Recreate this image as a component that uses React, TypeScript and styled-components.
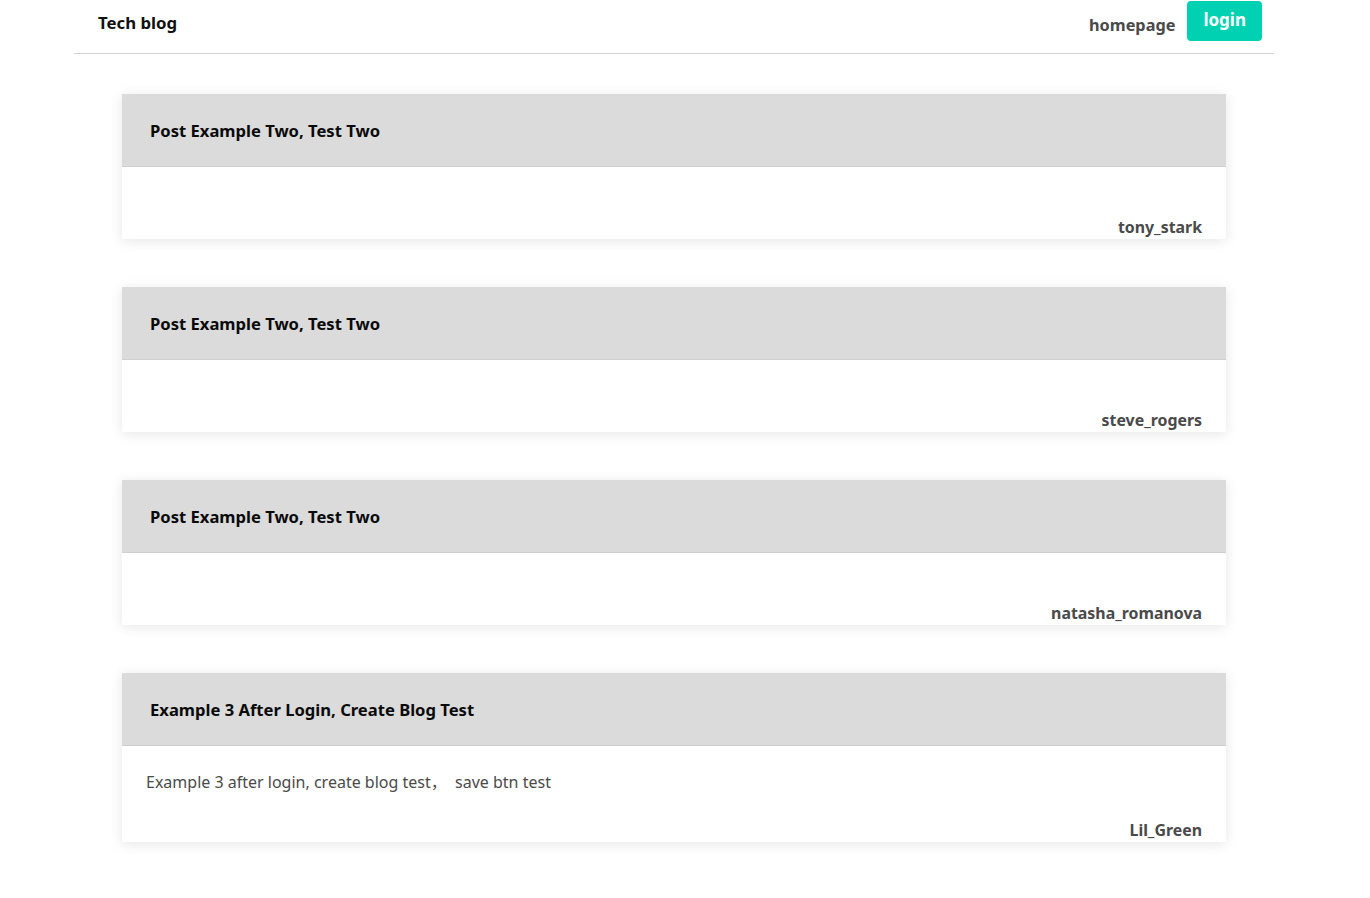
import React from 'react';
import styled, { createGlobalStyle } from 'styled-components';

const GlobalStyle = createGlobalStyle`
  html, body {
    margin: 0;
    padding: 0;
    background: #fff;
    font-family: "Noto Sans", "Open Sans", "Noto Sans CJK SC", sans-serif;
    color: #4a4a4a;
  }
`;

const Page = styled.div`
  width: 1200px;
  margin-left: 74px;
`;

const NavBar = styled.nav`
  height: 53px;
  border-bottom: 1px solid #d3d3d3;
  display: flex;
  justify-content: space-between;
  align-items: flex-start;
  padding: 0 12px 0 24px;
`;

const Brand = styled.div`
  font-size: 16.8px;
  font-weight: 700;
  color: #111;
  line-height: 46px;
`;

const NavRight = styled.div`
  display: flex;
  align-items: flex-start;
  gap: 12px;
  padding-top: 1px;
`;

const NavLink = styled.a`
  font-size: 16.3px;
  font-weight: 700;
  color: #4a4a4a;
  line-height: 48px;
  text-decoration: none;
`;

const LoginButton = styled.button`
  height: 40px;
  padding: 0 16px 2px;
  border: none;
  border-radius: 4px;
  background: #00d1b2;
  color: #fff;
  font-family: inherit;
  font-size: 17px;
  font-weight: 700;
  line-height: 38px;
`;

const PostList = styled.main`
  display: flex;
  flex-direction: column;
  gap: 48px;
  padding: 40px 48px;
`;

const Card = styled.article`
  background: #fff;
  box-shadow: 0 2px 12px rgba(0, 0, 0, 0.1);
`;

const CardHeader = styled.header`
  height: 72px;
  background: #dbdbdb;
  border-bottom: 1px solid #cfcfcf;
  display: flex;
  align-items: center;
  padding: 0 28px;
`;

const Title = styled.h2`
  margin: 0;
  font-size: 16.6px;
  font-weight: 700;
  color: #0a0a0a;
`;

const CardBody = styled.div`
  padding: 24px 24px 0 24px;
`;

const Content = styled.p`
  margin: 0 0 24px 0;
  font-size: 16px;
  line-height: 24px;
  color: #4a4a4a;
`;

const Author = styled.div`
  text-align: right;
  font-size: 15.9px;
  font-weight: 700;
  line-height: 24px;
  color: #4a4a4a;
`;

const posts = [
  { title: 'Post Example Two, Test Two', content: '', author: 'tony_stark' },
  { title: 'Post Example Two, Test Two', content: '', author: 'steve_rogers' },
  { title: 'Post Example Two, Test Two', content: '', author: 'natasha_romanova' },
  {
    title: 'Example 3 After Login, Create Blog Test',
    content: 'Example 3 after login, create blog test，\u00a0\u00a0save btn test',
    author: 'Lil_Green',
  },
];

export default function App() {
  return (
    <>
      <GlobalStyle />
      <Page>
        <NavBar>
          <Brand>Tech blog</Brand>
          <NavRight>
            <NavLink href="#">homepage</NavLink>
            <LoginButton>login</LoginButton>
          </NavRight>
        </NavBar>
        <PostList>
          {posts.map((post, i) => (
            <Card key={i}>
              <CardHeader>
                <Title>{post.title}</Title>
              </CardHeader>
              <CardBody>
                <Content>{post.content}</Content>
                <Author>{post.author}</Author>
              </CardBody>
            </Card>
          ))}
        </PostList>
      </Page>
    </>
  );
}
